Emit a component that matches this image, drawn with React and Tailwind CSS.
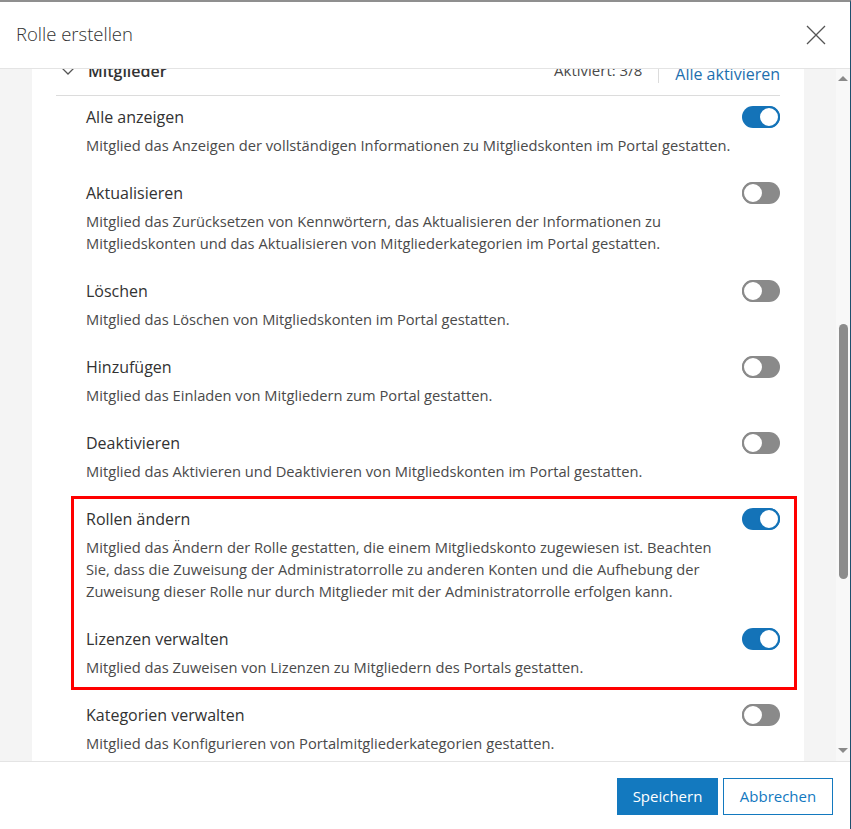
const items = [
  {
    title: "Alle anzeigen",
    desc: "Mitglied das Anzeigen der vollständigen Informationen zu Mitgliedskonten im Portal gestatten.",
    on: true,
  },
  {
    title: "Aktualisieren",
    desc: "Mitglied das Zurücksetzen von Kennwörtern, das Aktualisieren der Informationen zu Mitgliedskonten und das Aktualisieren von Mitgliederkategorien im Portal gestatten.",
    on: false,
  },
  {
    title: "Löschen",
    desc: "Mitglied das Löschen von Mitgliedskonten im Portal gestatten.",
    on: false,
  },
  {
    title: "Hinzufügen",
    desc: "Mitglied das Einladen von Mitgliedern zum Portal gestatten.",
    on: false,
  },
  {
    title: "Deaktivieren",
    desc: "Mitglied das Aktivieren und Deaktivieren von Mitgliedskonten im Portal gestatten.",
    on: false,
  },
];

const marked = [
  {
    title: "Rollen ändern",
    desc: "Mitglied das Ändern der Rolle gestatten, die einem Mitgliedskonto zugewiesen ist. Beachten Sie, dass die Zuweisung der Administratorrolle zu anderen Konten und die Aufhebung der Zuweisung dieser Rolle nur durch Mitglieder mit der Administratorrolle erfolgen kann.",
    on: true,
  },
  {
    title: "Lizenzen verwalten",
    desc: "Mitglied das Zuweisen von Lizenzen zu Mitgliedern des Portals gestatten.",
    on: true,
  },
];

const last = {
  title: "Kategorien verwalten",
  desc: "Mitglied das Konfigurieren von Portalmitgliederkategorien gestatten.",
  on: false,
};

function Toggle({ on }) {
  return (
    <div
      className={`w-[38px] h-[22px] rounded-full flex items-center shrink-0 ${
        on ? "bg-[#1473b8] justify-end" : "bg-[#8a8a8a] justify-start"
      }`}
    >
      <div
        className={`w-[22px] h-[22px] rounded-full bg-white border-2 ${
          on ? "border-[#1473b8]" : "border-[#8a8a8a]"
        }`}
      />
    </div>
  );
}

function Item({ item }) {
  return (
    <div>
      <div className="flex items-center justify-between h-[24px]">
        <span className="text-[16px] text-[#323232]">{item.title}</span>
        <Toggle on={item.on} />
      </div>
      <p className="mt-[5px] text-[14.7px] leading-[22px] text-[#4a4a4a] max-w-[652px]">
        {item.desc}
      </p>
    </div>
  );
}

export default function App() {
  return (
    <div
      className="w-[851px] h-[829px] flex flex-col bg-white border-t-2 border-[#8f8f8f] border-r border-r-[#1e4f6d] overflow-hidden"
      style={{ fontFamily: "'Open Sans', Lato, sans-serif" }}
    >
      {/* header */}
      <div className="h-[67px] shrink-0 flex items-center justify-between pl-4 pr-[24px] border-b border-[#e4e4e4]">
        <h2 className="text-[18.5px] font-light text-[#323232] -mt-[2px]">Rolle erstellen</h2>
        <svg width="20" height="20" viewBox="0 0 20 20" className="text-[#555]">
          <path d="M1 1 L19 19 M19 1 L1 19" stroke="currentColor" strokeWidth="1.3" />
        </svg>
      </div>

      {/* body */}
      <div className="flex-1 flex bg-[#f4f4f4] overflow-hidden">
        <div className="flex-1 overflow-hidden pl-[32px] pr-[32px]">
          <div className="bg-white px-6 -mt-[23px] pb-6">
            <div className="h-[50px] flex items-center border-b border-[#dcdcdc]">
              <svg width="16" height="10" viewBox="0 0 16 10" className="ml-[4px] text-[#555]">
                <path d="M1 1 L8 8 L15 1" fill="none" stroke="currentColor" strokeWidth="1.3" />
              </svg>
              <span className="ml-[12px] text-[16px] font-semibold text-[#323232]">Mitglieder</span>
              <span className="ml-auto text-[15px] text-[#4a4a4a]">Aktiviert: 3/8</span>
              <div className="w-px h-[20px] bg-[#dcdcdc] mx-[16px] mt-[4px]" />
              <span className="text-[16px] text-[#1e6fae] mt-[6px]">Alle aktivieren</span>
            </div>

            <div className="pl-[30px] pt-[9px] flex flex-col gap-[25px]">
              {items.map((it) => (
                <Item key={it.title} item={it} />
              ))}
              <div className="relative flex flex-col gap-[25px]">
                <div className="absolute -left-[15px] -right-[17px] -top-[11px] -bottom-[12px] border-[3px] border-[#ff0000] pointer-events-none" />
                {marked.map((it) => (
                  <Item key={it.title} item={it} />
                ))}
              </div>
              <Item item={last} />
            </div>
          </div>
        </div>

        {/* scrollbar */}
        <div className="w-[14px] shrink-0 bg-[#f8f8f8] flex flex-col items-center">
          <div className="mt-[7px] w-0 h-0 border-l-[5px] border-r-[5px] border-b-[5px] border-l-transparent border-r-transparent border-b-[#8a8a8a]" />
          <div className="mt-[243px] w-[9px] h-[255px] rounded-full bg-[#8c8c8c]" />
          <div className="mt-auto mb-[8px] w-0 h-0 border-l-[5px] border-r-[5px] border-t-[5px] border-l-transparent border-r-transparent border-t-[#8a8a8a]" />
        </div>
      </div>

      {/* footer */}
      <div className="h-[68px] shrink-0 border-t border-[#e4e4e4] flex items-start justify-end gap-[5px] pt-[16px] pr-[17px]">
        <button className="w-[101px] h-[37px] bg-[#1379bf] text-white text-[15px]">Speichern</button>
        <button className="w-[110px] h-[37px] border border-[#1379bf] text-[#1379bf] text-[15px] bg-white">
          Abbrechen
        </button>
      </div>
    </div>
  );
}
